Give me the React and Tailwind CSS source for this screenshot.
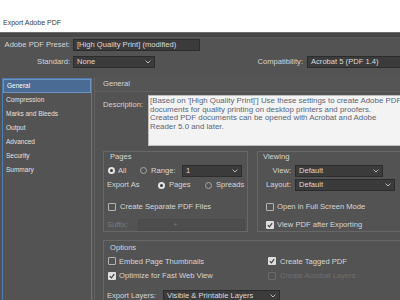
import React from "react";

const Chevron = () => (
  <svg width="6" height="4" viewBox="0 0 6 4" className="shrink-0">
    <path d="M0.6 0.6 L3 3 L5.4 0.6" fill="none" stroke="#b8b8b8" strokeWidth="1" />
  </svg>
);

function Field({ text, className = "", chevron = true }) {
  return (
    <div
      className={`h-[12px] bg-[#3b3b3b] border border-[#2c2c2c] flex items-center justify-between pl-[3px] pr-[3px] text-[#dcdcdc] shrink-0 ${className}`}
    >
      <span className="whitespace-nowrap leading-none">{text}</span>
      {chevron && <Chevron />}
    </div>
  );
}

const Radio = ({ checked }) =>
  checked ? (
    <span className="w-[7px] h-[7px] rounded-full bg-[#e4e4e4] flex items-center justify-center shrink-0">
      <span className="w-[3px] h-[3px] rounded-full bg-[#3a3a3a]" />
    </span>
  ) : (
    <span className="w-[7px] h-[7px] rounded-full border border-[#a6a6a6] shrink-0" />
  );

const Check = ({ checked, disabled }) =>
  checked ? (
    <span className="w-[8px] h-[8px] rounded-[1px] bg-[#dedede] flex items-center justify-center shrink-0">
      <svg width="6" height="6" viewBox="0 0 6 6">
        <path d="M0.8 3.2 L2.4 4.8 L5.2 1.2" fill="none" stroke="#3a3a3a" strokeWidth="1.1" />
      </svg>
    </span>
  ) : (
    <span
      className={`w-[8px] h-[8px] rounded-[1px] border shrink-0 ${disabled ? "border-[#6c6c6c]" : "border-[#b4b4b4]"}`}
    />
  );

export default function App() {
  const side = ["General", "Compression", "Marks and Bleeds", "Output", "Advanced", "Security", "Summary"];
  return (
    <div className="w-[400px] h-[300px] overflow-hidden bg-[#535353] font-['Liberation_Sans',Arial,sans-serif] text-[7.6px] text-[#d6d6d6] flex flex-col">
      {/* title bar */}
      <div className="h-[32px] bg-white flex items-end pl-[3px] pb-[6px] shrink-0">
        <span className="text-[7px] text-[#3a3a3a] leading-none">Export Adobe PDF</span>
      </div>
      <div className="h-[1px] bg-[#6c6c6c] shrink-0" />
      <div className="h-[5px] bg-[#474747] border-b border-[#5b5b5b] shrink-0" />

      {/* preset row */}
      <div className="mt-[1px] flex items-center h-[12px] shrink-0">
        <span className="w-[70px] text-right whitespace-nowrap">Adobe PDF Preset:</span>
        <Field text="[High Quality Print] (modified)" chevron={false} className="ml-[3px] w-[127px]" />
      </div>
      {/* standard row */}
      <div className="mt-[5px] flex items-center h-[12px] shrink-0">
        <span className="w-[70px] text-right whitespace-nowrap">Standard:</span>
        <Field text="None" className="ml-[3px] w-[82px]" />
        <span className="ml-auto whitespace-nowrap">Compatibility:</span>
        <Field text="Acrobat 5 (PDF 1.4)" chevron={false} className="ml-[4px] w-[96px] -mr-[3px]" />
      </div>

      {/* body */}
      <div className="mt-[9px] flex flex-1 min-h-0">
        {/* sidebar */}
        <div className="mt-[1px] ml-[2px] w-[90px] border border-b-0 border-[#4f7db3] flex flex-col shrink-0 text-[6.5px] text-[#e2e2e2]">
          {side.map((s, i) => (
            <div
              key={s}
              className={`h-[14px] flex items-center pl-[3px] whitespace-nowrap ${i === 0 ? "bg-[#4a6c94] border border-[#6e93bf] text-white" : ""}`}
            >
              {s}
            </div>
          ))}
        </div>

        {/* main */}
        <div className="ml-[2px] flex-1 border-l border-[#626262] flex flex-col min-w-0">
          <div className="h-[15px] flex items-center pl-[8px] border-b border-[#5e5e5e] bg-[#555555] shrink-0">
            General
          </div>
          <div className="pl-[8px]">
            {/* description */}
            <div className="mt-[3px] flex">
              <span className="w-[45px] pt-[4px] shrink-0">Description:</span>
              <div className="h-[51px] flex-1 -mr-[8px] bg-[#f3f3f3] border border-[#bdbdbd] pl-[1px] pt-[1px] text-[7.9px] text-[#5a6678] leading-[8.7px] whitespace-nowrap overflow-hidden">
                <div>[Based on '[High Quality Print]'] Use these settings to create Adobe PDF</div>
                <div>documents for quality printing on desktop printers and proofers.</div>
                <div>Created PDF documents can be opened with Acrobat and Adobe</div>
                <div>Reader 5.0 and later.</div>
              </div>
            </div>

            {/* pages + viewing */}
            <div className="mt-[5px] flex">
              <div className="w-[145px] border border-[#676767] flex flex-col shrink-0">
                <div className="h-[9px] flex items-center pl-[6px]">Pages</div>
                <div className="mt-[3px] h-[13px] flex items-center pl-[4px]">
                  <div className="w-[32px] flex items-center gap-[3px]">
                    <Radio checked />
                    <span>All</span>
                  </div>
                  <Radio />
                  <span className="ml-[4px] w-[31px]">Range:</span>
                  <Field text="1" className="w-[60px]" />
                </div>
                <div className="h-[16px] flex items-center pl-[3px]">
                  <span className="w-[51px]">Export As</span>
                  <Radio checked />
                  <span className="ml-[4px] w-[36px]">Pages</span>
                  <Radio />
                  <span className="ml-[4px]">Spreads</span>
                </div>
                <div className="mt-[7px] h-[14px] flex items-center pl-[4px] gap-[4px]">
                  <Check />
                  <span>Create Separate PDF Files</span>
                </div>
                <div className="mt-[4px] h-[13px] flex items-center pl-[3px]">
                  <span className="w-[31px] text-[#7c7c7c]">Suffix:</span>
                  <div className="h-[12px] w-[107px] bg-[#4d4d4d] border border-[#494949] flex items-center pl-[34px] text-[#777]">
                    +
                  </div>
                </div>
              </div>

              <div className="ml-[9px] flex-1 -mr-[8px] border border-[#676767] flex flex-col">
                <div className="h-[9px] flex items-center pl-[5px]">Viewing</div>
                <div className="mt-[3px] h-[13px] flex items-center">
                  <span className="w-[33px] text-right">View:</span>
                  <Field text="Default" className="ml-[4px] w-[88px]" />
                </div>
                <div className="h-[16px] flex items-center">
                  <span className="w-[33px] text-right">Layout:</span>
                  <Field text="Default" className="ml-[4px] w-[100px]" />
                </div>
                <div className="mt-[7px] h-[14px] flex items-center pl-[8px] gap-[3px]">
                  <Check />
                  <span>Open in Full Screen Mode</span>
                </div>
                <div className="mt-[4px] h-[13px] flex items-center pl-[8px] gap-[3px]">
                  <Check checked />
                  <span>View PDF after Exporting</span>
                </div>
              </div>
            </div>

            {/* options */}
            <div className="mt-[8px] -mr-[8px] border border-b-0 border-[#676767] flex flex-col">
              <div className="h-[14px] flex items-center pl-[6px]">Options</div>
              <div className="h-[13px] flex items-center pl-[4px]">
                <div className="w-[160px] flex items-center gap-[3px]">
                  <Check />
                  <span>Embed Page Thumbnails</span>
                </div>
                <div className="flex items-center gap-[4px]">
                  <Check checked />
                  <span>Create Tagged PDF</span>
                </div>
              </div>
              <div className="h-[16px] flex items-center pl-[4px]">
                <div className="w-[160px] flex items-center gap-[3px]">
                  <Check checked />
                  <span>Optimize for Fast Web View</span>
                </div>
                <div className="flex items-center gap-[4px] text-[#6f6f6f]">
                  <Check disabled />
                  <span>Create Acrobat Layers</span>
                </div>
              </div>
              <div className="mt-[6px] h-[12px] flex items-center pl-[3px]">
                <span className="w-[56px]">Export Layers:</span>
                <Field text="Visible & Printable Layers" className="w-[117px]" />
              </div>
            </div>
          </div>
        </div>
      </div>
    </div>
  );
}
